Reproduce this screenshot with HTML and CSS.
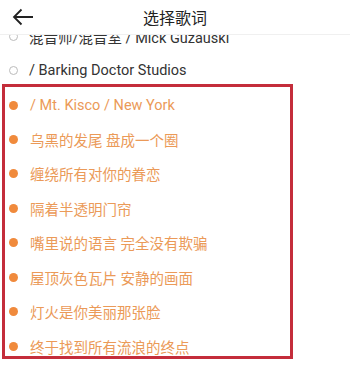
FILE: index.html
```html
<!DOCTYPE html>
<html lang="zh">
<head>
  <meta charset="UTF-8">
  <title>选择歌词</title>
  <link rel="stylesheet" href="styles.css">
</head>
<body>
  <div class="page">
    <div class="header">
      <svg class="back" width="22" height="18" viewBox="0 0 22 18">
        <path d="M21 9H2M9.5 1.5L2 9l7.5 7.5" fill="none" stroke="#222" stroke-width="1.8"/>
      </svg>
      <h1>选择歌词</h1>
    </div>
    <div class="scroll">
      <ul class="lyrics">
        <li class="line"><span class="dot"></span>混音师/混音室 / Mick Guzauski</li>
        <li class="line"><span class="dot"></span>/ Barking Doctor Studios</li>
        <li class="line on"><span class="dot"></span>/ Mt. Kisco / New York</li>
        <li class="line on"><span class="dot"></span>乌黑的发尾 盘成一个圈</li>
        <li class="line on"><span class="dot"></span>缠绕所有对你的眷恋</li>
        <li class="line on"><span class="dot"></span>隔着半透明门帘</li>
        <li class="line on"><span class="dot"></span>嘴里说的语言 完全没有欺骗</li>
        <li class="line on"><span class="dot"></span>屋顶灰色瓦片 安静的画面</li>
        <li class="line on"><span class="dot"></span>灯火是你美丽那张脸</li>
        <li class="line on"><span class="dot"></span>终于找到所有流浪的终点</li>
      </ul>
      <div class="mark"></div>
    </div>
  </div>
</body>
</html>
```

FILE: styles.css
```css
html, body {
  margin: 0;
  padding: 0;
  background: #fff;
}
.page {
  width: 350px;
  height: 369px;
  overflow: hidden;
  font-family: Roboto, "Noto Sans CJK SC", sans-serif;
}
.header {
  height: 35px;
  display: flex;
  align-items: center;
  justify-content: center;
  position: relative;
  background: #fff;
  border-bottom: 1px solid #f0f0f0;
  box-sizing: border-box;
  z-index: 2;
}
.header h1 {
  margin: 0;
  font-size: 16px;
  font-weight: normal;
  color: #222;
}
.back {
  position: absolute;
  left: 12px;
  top: 8px;
}
.scroll {
  display: flow-root;
  position: relative;
  height: 334px;
}
.lyrics {
  list-style: none;
  margin: -16px 0 0;
  padding: 0;
}
.line {
  height: 34.43px;
  display: flex;
  align-items: center;
  font-size: 14.5px;
  color: #333;
}
.dot {
  width: 7px;
  height: 7px;
  border: 1px solid #bbb;
  border-radius: 50%;
  margin: 0 11px 0 9px;
  flex: none;
}
.line.on {
  color: #eb9a58;
}
.line.on .dot {
  width: 9px;
  height: 9px;
  border: none;
  background: #f08a3c;
  margin: 0 12px 0 9px;
}
.mark {
  position: absolute;
  left: 2px;
  top: 49px;
  width: 291px;
  height: 275px;
  border: 3px solid #c42d3b;
  box-sizing: border-box;
}
```
